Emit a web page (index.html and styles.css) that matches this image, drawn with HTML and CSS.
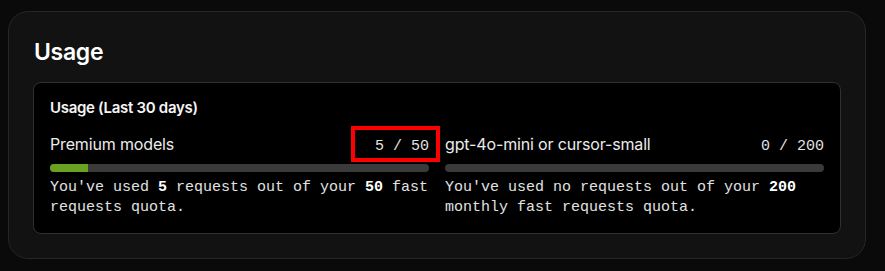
FILE: index.html
```html
<!DOCTYPE html>
<html lang="en">
<head>
  <meta charset="UTF-8" />
  <title>Usage</title>
  <link rel="stylesheet" href="styles.css">
</head>
<body>
  <div class="card">
    <h2>Usage</h2>

    <div class="panel">
      <h3>Usage (Last 30 days)</h3>

      <div class="columns">
        <div class="meter">
          <div class="meter-head">
            <span class="label">Premium models</span>
            <span class="count highlight">5 / 50</span>
          </div>
          <div class="bar"><div class="fill" style="width: 10%"></div></div>
          <p class="note">You've used <b>5</b> requests out of your <b>50</b> fast requests quota.</p>
        </div>

        <div class="meter">
          <div class="meter-head">
            <span class="label">gpt-4o-mini or cursor-small</span>
            <span class="count">0 / 200</span>
          </div>
          <div class="bar"><div class="fill" style="width: 0%"></div></div>
          <p class="note">You've used no requests out of your <b>200</b> monthly fast requests quota.</p>
        </div>
      </div>
    </div>
  </div>
</body>
</html>
```

FILE: styles.css
```css
* {
  box-sizing: border-box;
}
body {
  background: #0a0a0a;
  color: #f1f1f1;
  margin: 0;
  padding: 11px 19px 0 8px;
  font-family: Inter, 'Noto Sans', sans-serif;
}
.card {
  background: #121212;
  border: 1px solid #262626;
  border-radius: 20px;
  padding: 26px 24px 24px 24px;
}
h2 {
  margin: 0 0 16px 1px;
  font-size: 23px;
  line-height: 28px;
  font-weight: 600;
  letter-spacing: -0.3px;
  color: #fff;
}
.panel {
  background: #000;
  border: 1px solid #303030;
  border-radius: 8px;
  padding: 15px 16px 15px 16px;
}
h3 {
  margin: 0 0 14px;
  font-size: 15px;
  line-height: 20px;
  font-weight: 600;
  letter-spacing: -0.3px;
  color: #f5f5f5;
}
.columns {
  display: flex;
  gap: 16px;
}
.meter {
  flex: 1;
  min-width: 0;
}
.meter-head {
  display: flex;
  justify-content: space-between;
  align-items: baseline;
}
.label {
  font-size: 16px;
  line-height: 24px;
  letter-spacing: -0.15px;
  color: #ececec;
}
.count, .note {
  font-family: 'Liberation Mono', monospace;
  font-size: 15px;
  color: #e2e2e2;
}
.count {
  line-height: 20px;
}
.highlight {
  position: relative;
}
.highlight::after {
  content: "";
  position: absolute;
  top: -11px;
  bottom: -5px;
  left: -24px;
  right: -11px;
  border: 4px solid #ff0000;
}
.bar {
  margin-top: 7px;
  height: 8px;
  border-radius: 4px;
  background: #3a3a3a;
  overflow: hidden;
}
.fill {
  height: 100%;
  background: #6aa121;
}
.note {
  margin: 6px 0 0;
  line-height: 20px;
}
.note b {
  color: #fff;
  font-weight: bold;
}
```
